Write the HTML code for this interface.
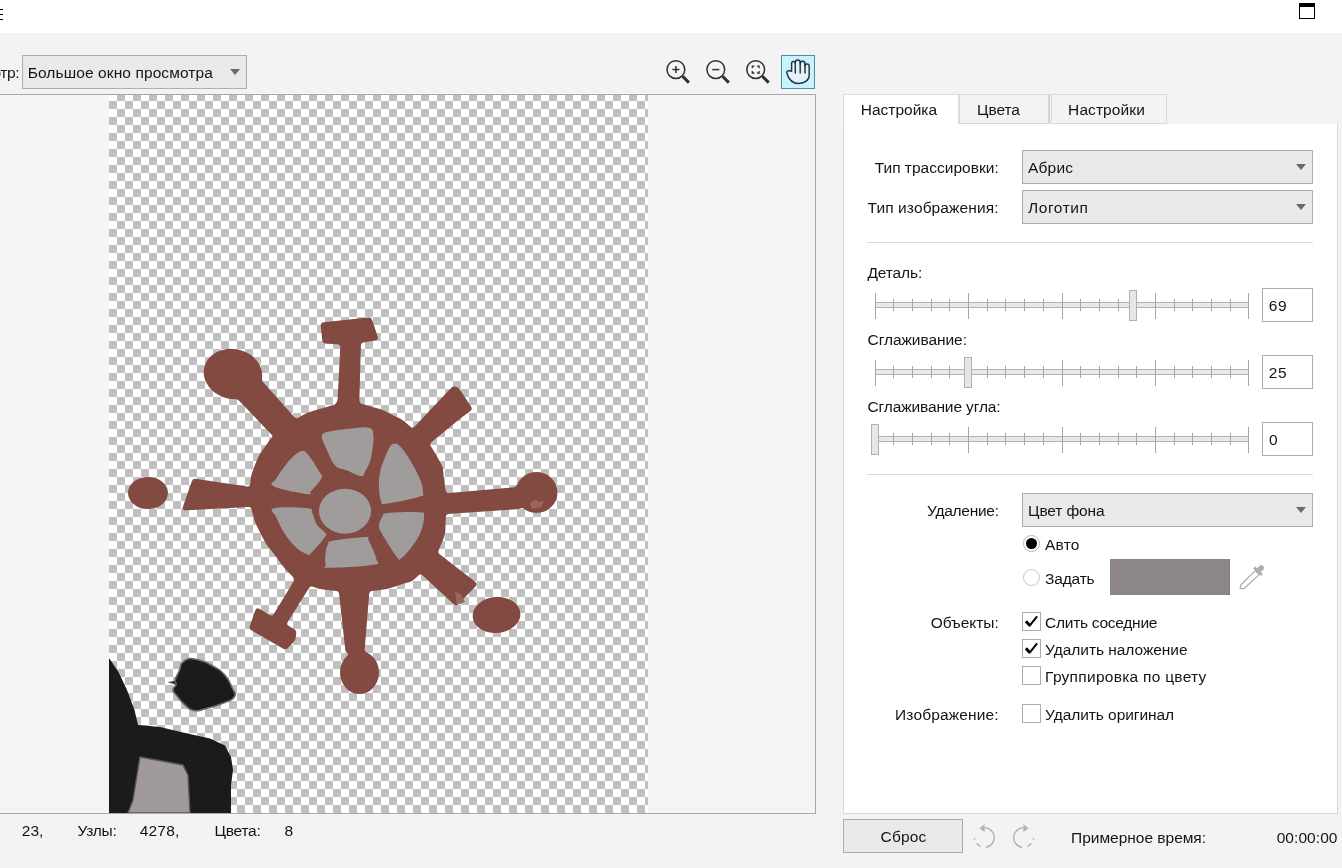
<!DOCTYPE html>
<html lang="ru">
<head>
<meta charset="utf-8">
<title>PowerTRACE</title>
<style>
html,body{margin:0;padding:0;}
body{width:1342px;height:868px;overflow:hidden;position:relative;background:#f3f3f3;
 font-family:"Liberation Sans",sans-serif;font-size:15.5px;color:#141414;}
.a{position:absolute;}
.t{position:absolute;white-space:nowrap;line-height:20.000px;height:20px;}
.dd{position:absolute;box-sizing:border-box;background:#e9e9e9;border:1px solid #adadad;}
.arr{position:absolute;width:0;height:0;border-left:5.5px solid transparent;border-right:5.5px solid transparent;border-top:6px solid #6b6b6b;}
.box{position:absolute;box-sizing:border-box;background:#fff;border:1px solid #ababab;}
.sep{position:absolute;height:1px;background:#dcdcdc;left:867px;width:446px;}
.tab{position:absolute;box-sizing:border-box;background:#f3f3f3;border:1px solid #d9d9d9;}
.track{position:absolute;box-sizing:border-box;height:6px;background:#e8e8e8;border:1px solid #b2b2b2;left:875px;width:374px;}
.thumb{position:absolute;box-sizing:border-box;width:8px;height:31px;background:#e6e6e6;border:1px solid #b0b0b0;}
.tk{position:absolute;width:1px;background:#a6a6a6;}
</style>
</head>
<body>

<div class="a" style="left:0;top:0;width:1342px;height:33px;background:#fff"></div>
<div class="a" style="left:0;top:9px;width:3px;height:1.2px;background:#000"></div>
<div class="a" style="left:0;top:14px;width:3px;height:1.2px;background:#000"></div>
<div class="a" style="left:0;top:19px;width:3px;height:1.2px;background:#000"></div>
<div class="a" style="left:1299px;top:3px;width:16px;height:16px;box-sizing:border-box;border:1px solid #000;border-top:4px solid #000;background:#fff"></div>
<div class="dd" style="left:22px;top:55px;width:225px;height:34px"></div>
<div class="arr" style="left:229.5px;top:69px"></div>
<div class="a" style="left:781px;top:55px;width:34px;height:34px;box-sizing:border-box;background:#c9f3fc;border:1px solid #4f8f98"></div>
<svg class="a" style="left:640px;top:50px" width="180" height="42" viewBox="640 50 180 42" fill="none" stroke="#303030">
<g stroke-width="1.5">
<circle cx="675.9" cy="69.6" r="8.9"/>
<circle cx="715.8" cy="69.6" r="8.9"/>
<circle cx="755.7" cy="69.6" r="8.9"/>
<path d="M672.4 69.6H679.4M675.9 66.1V73.1"/>
<path d="M712.3 69.6H719.3"/>
</g>
<g stroke-width="3">
<path d="M682.6 76.3L688.9 82.6"/>
<path d="M722.5 76.3L728.8 82.6"/>
<path d="M762.4 76.3L768.7 82.6"/>
</g>
<g stroke-width="1.3">
<path d="M752.3 68.3V66.2H754.4M757 66.2H759.1V68.3M759.1 70.9V73H757M754.4 73H752.3V70.9"/>
</g>
<g stroke="#27343c" stroke-width="1.45" stroke-linecap="round" stroke-linejoin="round">
<path fill="#e6f0fb" d="M791.6 71.2V63.4A1.85 1.85 0 0 1 795.3 63.4V62.5A2.45 2.45 0 0 1 800.2 62.5V63.7A2.4 2.4 0 0 1 805 63.7V66.1A2.07 2.07 0 0 1 809.15 66.1V75.5C809.1 80 804.6 83.5 799 83.5C793 83.5 788.6 79.4 786.9 73.2C786.4 71.4 787.6 70.7 789 70.8Z"/>
<path d="M795.3 63.4V72.9M800.2 63V72.9M805 64V72.9"/>
</g>
</svg>

<div class="a" style="left:-2px;top:94px;width:816px;height:718px;border:1px solid #a8a8a8;background:#f4f4f4"></div>
<div class="a" style="left:109px;top:95px;width:539px;height:718px;background-color:#fff;background-image:conic-gradient(#c0c0c0 25%,#fff 0 50%,#c0c0c0 0 75%,#fff 0);background-size:16px 16px;background-position:0 -2px"></div>
<svg class="a" style="left:109px;top:95px" width="539" height="718" viewBox="109 95 539 718">
<defs><filter id="rnd" x="-5%" y="-5%" width="110%" height="110%" color-interpolation-filters="sRGB"><feGaussianBlur stdDeviation="1.6"/><feColorMatrix values="1 0 0 0 0 0 1 0 0 0 0 0 1 0 0 0 0 0 4 -1.5"/></filter></defs>
<g fill="#824a41" stroke="#824a41" stroke-width="2" stroke-linejoin="round" filter="url(#rnd)">
<path d="M350.0 405.0C367.3 404.3 358.0 404.3 372.0 408.0C386.0 411.7 379.0 409.1 392.0 416.0C405.0 422.9 396.7 415.7 411.0 428.7C425.3 441.7 424.1 436.2 435.0 455.0C445.9 473.8 440.4 465.0 443.7 485.0C447.0 505.0 446.7 494.2 445.0 515.0C443.3 535.8 447.0 528.3 438.7 547.5C430.4 566.7 432.9 560.4 420.0 572.5C407.1 584.6 416.7 577.9 400.0 583.7C383.3 589.5 390.8 587.9 370.0 590.0C349.2 592.1 358.3 592.1 337.5 590.0C316.7 587.9 322.5 588.7 307.5 583.7C292.5 578.7 303.3 585.0 292.5 575.0C281.7 565.0 285.0 567.0 275.0 553.7C265.0 540.4 270.0 550.0 262.5 535.0C255.0 520.0 256.3 524.5 252.5 508.7C248.7 492.9 249.8 502.1 251.0 487.5C252.2 472.9 250.5 479.2 256.0 465.0C261.5 450.8 260.8 454.7 267.5 445.0C274.2 435.3 266.8 444.0 276.0 436.0C285.2 428.0 280.3 429.7 295.0 421.0C309.7 412.3 301.7 415.3 320.0 410.0C338.3 404.7 332.7 405.7 350.0 405.0Z"/>
<path d="M321.5 323.5L370.5 318.3L377.5 339.0L360.0 342.0L358.3 402.0L366.0 414.0L332.0 414.0L338.5 401.0L341.5 343.5L323.5 342.5Z"/>
<path d="M258.0 378.0L300.0 425.0L280.0 442.0L238.0 398.0Z"/>
<path d="M193.5 479.5L257.0 489.0L257.0 505.5L183.0 509.5Z"/>
<path d="M409.0 434.0L453.5 387.0L458.0 388.5L471.5 409.0L460.0 417.5L424.0 447.0Z"/>
<path d="M438.0 495.0L518.0 488.0L520.0 508.0L440.0 513.5Z"/>
<path d="M430.0 548.0L476.5 584.0L456.0 605.0L414.0 566.0Z"/>
<path d="M339.0 584.0L369.0 584.0L363.5 652.0L346.5 652.0Z"/>
<path d="M298.0 576.0L311.0 583.0L284.0 626.0L272.0 619.0Z"/>
<path d="M257.0 608.5L295.5 631.0L294.5 639.5L285.5 649.0L250.0 628.5Z"/>
<ellipse cx="233" cy="374" rx="28.5" ry="24" transform="rotate(12 233 374)"/>
<ellipse cx="148" cy="493" rx="19" ry="15"/>
<ellipse cx="536.5" cy="492.5" rx="20" ry="19.5"/>
<ellipse cx="496.5" cy="615" rx="23" ry="17" transform="rotate(-5 496.5 615)"/>
<ellipse cx="359.5" cy="672.5" rx="18.5" ry="20.5"/>
</g>
<g fill="#a19c9c">
<path d="M321.9 436.9C322.6 435.3 320.6 433.9 326.0 432.3C331.4 430.7 340.8 429.7 349.1 428.8C357.4 427.9 362.7 426.4 367.5 427.6C372.3 428.8 372.6 428.6 373.3 434.6C374.0 440.6 372.6 450.2 371.0 457.6C369.4 465.0 367.3 467.7 365.2 471.4C363.1 475.1 364.3 476.2 360.6 476.0C356.9 475.8 351.9 472.4 346.8 470.3C341.7 468.2 339.2 469.6 335.3 465.7C331.4 461.8 329.7 455.8 327.2 450.7C324.7 445.6 323.7 443.1 322.6 440.3C321.5 437.5 321.2 438.5 321.9 436.9Z"/>
<path d="M301.8 451.2C304.1 451.2 304.1 450.1 307.6 454.1C311.1 458.1 316.3 466.6 319.1 471.4C321.9 476.2 323.0 474.4 321.4 478.3C319.8 482.2 313.9 487.9 311.1 491.0C308.3 494.1 315.0 494.9 307.6 494.0C300.2 493.1 280.4 489.5 274.2 486.4C268.0 483.3 274.0 482.9 276.5 478.3C279.0 473.7 283.0 468.2 286.9 463.4C290.8 458.6 293.1 456.5 296.1 454.1C299.1 451.7 299.5 451.2 301.8 451.2Z"/>
<path d="M394.0 443.8C395.8 443.8 396.3 442.4 399.8 446.1C403.3 449.8 407.2 455.3 411.3 462.2C415.4 469.1 418.2 474.6 420.5 480.6C422.8 486.6 423.0 489.0 422.8 492.2C422.6 495.4 426.8 494.5 419.4 496.8C412.0 499.1 393.5 502.8 385.9 503.7C378.3 504.6 382.7 504.6 381.3 501.4C379.9 498.2 379.2 493.6 379.0 487.6C378.8 481.6 378.8 477.9 380.2 471.4C381.6 464.9 383.8 460.4 385.9 455.3C388.0 450.2 389.0 448.4 390.6 446.1C392.2 443.8 392.2 443.8 394.0 443.8Z"/>
<path d="M274.2 508.3C280.4 506.5 300.0 507.4 307.6 508.3C315.2 509.2 310.4 509.7 312.2 512.9C314.0 516.1 314.3 520.5 316.8 524.4C319.3 528.3 323.3 530.0 324.9 532.5C326.5 535.0 327.7 533.0 324.9 537.1C322.1 541.2 314.6 549.7 311.1 553.2C307.6 556.7 310.6 555.5 307.6 554.4C304.6 553.3 300.7 551.7 296.1 547.5C291.5 543.3 288.5 539.6 284.6 533.6C280.7 527.6 278.6 522.6 276.5 517.5C274.4 512.4 268.0 510.1 274.2 508.3Z"/>
<path d="M331.8 541.0C339.2 539.6 357.8 537.2 365.2 537.1C372.6 537.0 366.5 536.2 368.7 540.6C370.9 545.0 375.4 554.2 376.3 559.0C377.2 563.8 382.7 563.0 373.3 564.7C363.9 566.4 339.0 567.7 329.5 567.7C320.0 567.7 326.4 567.8 325.6 564.7C324.8 561.6 325.1 556.2 325.6 552.1C326.1 548.0 327.1 546.2 328.3 544.0C329.5 541.8 324.4 542.4 331.8 541.0Z"/>
<path d="M388.2 512.9C395.6 512.1 412.2 511.5 419.4 512.2C426.6 512.9 423.8 512.3 424.0 516.4C424.2 520.5 423.0 526.3 420.5 532.5C418.0 538.7 415.2 542.3 411.3 547.5C407.4 552.7 403.7 556.4 400.9 558.5C398.1 560.6 400.0 560.7 397.5 557.8C395.0 554.9 391.4 549.1 388.2 544.0C385.0 538.9 383.1 536.2 381.3 532.5C379.5 528.8 378.8 528.8 379.0 525.6C379.2 522.4 380.7 518.9 382.5 516.4C384.3 513.9 380.8 513.7 388.2 512.9Z"/>
<ellipse cx="345" cy="511.2" rx="26" ry="22.5"/>
</g>
<path d="M530 503l5-3 4 2 5-1-3 6-9 2z" fill="#9a6660"/>
<path d="M455 592l6 2 4 8-8 3z" fill="#9a6660"/>
<g fill="#1b1b1b">
<path d="M109 658L118.5 672L127 690L134.5 710L138 725L160 727L185 733L210 738.5L225 745.5L231 757L233 770L231 785V813H109Z"/>
<path d="M184.4 660.7C189.4 657.7 189.9 658.0 197.9 659.7C205.9 661.4 207.3 662.8 214.5 667.0C221.7 671.2 220.2 669.8 224.9 675.3C229.6 680.8 229.6 681.9 232.1 687.7C234.6 693.5 236.7 692.8 234.2 697.0C231.7 701.2 230.3 700.2 222.8 703.3C215.3 706.4 214.0 706.6 206.2 708.5C198.4 710.4 199.5 711.6 193.7 710.5C187.9 709.4 188.8 708.2 184.4 704.3C180.0 700.4 180.1 699.9 177.1 696.0C174.1 692.1 173.3 692.8 173.0 689.8C172.7 686.8 175.6 687.1 176.1 684.6C176.6 682.1 174.2 684.1 175.0 680.5C175.8 676.9 176.7 676.3 179.2 671.0C181.7 665.7 179.4 663.7 184.4 660.7Z" stroke="#6a6666" stroke-width="1.6" stroke-linejoin="round"/>
<path d="M176 684.2L168.6 682.3L175.5 681Z" stroke="#6a6666" stroke-width="1"/>
</g>
<path d="M140 757L183 765L188 775L190 813H128L133 800L137 775Z" fill="#a09b9a" stroke="#5a5757" stroke-width="1.4" stroke-linejoin="round"/>
</svg>

<div class="a" style="left:843px;top:124px;width:493px;height:689px;background:#fff;border:1px solid #d8d8d8;border-top:none"></div>
<div class="tab" style="left:959px;top:94px;width:91px;height:30px;border-right:2px solid #d3d3d3"></div>
<div class="tab" style="left:1051px;top:94px;width:116px;height:30px"></div>
<div class="a" style="left:843px;top:94px;width:114px;height:30px;background:#fff;border:1px solid #dedede;border-bottom:none"></div>
<div class="dd" style="left:1022px;top:150px;width:291px;height:34px"></div>
<div class="arr" style="left:1296px;top:164px"></div>
<div class="dd" style="left:1022px;top:190px;width:291px;height:34px"></div>
<div class="arr" style="left:1296px;top:204px"></div>
<div class="dd" style="left:1022px;top:493px;width:291px;height:34px"></div>
<div class="arr" style="left:1296px;top:507px"></div>
<div class="sep" style="top:242px"></div>
<div class="sep" style="top:474px"></div>
<div class="track" style="top:302px"></div>
<div class="tk" style="left:875px;top:293px;height:26px"></div>
<div class="tk" style="left:893px;top:299px;height:12px"></div>
<div class="tk" style="left:912px;top:299px;height:12px"></div>
<div class="tk" style="left:931px;top:299px;height:12px"></div>
<div class="tk" style="left:949px;top:299px;height:12px"></div>
<div class="tk" style="left:968px;top:293px;height:26px"></div>
<div class="tk" style="left:987px;top:299px;height:12px"></div>
<div class="tk" style="left:1005px;top:299px;height:12px"></div>
<div class="tk" style="left:1024px;top:299px;height:12px"></div>
<div class="tk" style="left:1043px;top:299px;height:12px"></div>
<div class="tk" style="left:1062px;top:293px;height:26px"></div>
<div class="tk" style="left:1080px;top:299px;height:12px"></div>
<div class="tk" style="left:1099px;top:299px;height:12px"></div>
<div class="tk" style="left:1118px;top:299px;height:12px"></div>
<div class="tk" style="left:1136px;top:299px;height:12px"></div>
<div class="tk" style="left:1155px;top:293px;height:26px"></div>
<div class="tk" style="left:1174px;top:299px;height:12px"></div>
<div class="tk" style="left:1192px;top:299px;height:12px"></div>
<div class="tk" style="left:1211px;top:299px;height:12px"></div>
<div class="tk" style="left:1230px;top:299px;height:12px"></div>
<div class="tk" style="left:1248px;top:293px;height:26px"></div>
<div class="thumb" style="left:1129px;top:290px"></div>
<div class="box" style="left:1262px;top:288px;width:51px;height:34px"></div>
<div class="track" style="top:369px"></div>
<div class="tk" style="left:875px;top:360px;height:26px"></div>
<div class="tk" style="left:893px;top:366px;height:12px"></div>
<div class="tk" style="left:912px;top:366px;height:12px"></div>
<div class="tk" style="left:931px;top:366px;height:12px"></div>
<div class="tk" style="left:949px;top:366px;height:12px"></div>
<div class="tk" style="left:968px;top:360px;height:26px"></div>
<div class="tk" style="left:987px;top:366px;height:12px"></div>
<div class="tk" style="left:1005px;top:366px;height:12px"></div>
<div class="tk" style="left:1024px;top:366px;height:12px"></div>
<div class="tk" style="left:1043px;top:366px;height:12px"></div>
<div class="tk" style="left:1062px;top:360px;height:26px"></div>
<div class="tk" style="left:1080px;top:366px;height:12px"></div>
<div class="tk" style="left:1099px;top:366px;height:12px"></div>
<div class="tk" style="left:1118px;top:366px;height:12px"></div>
<div class="tk" style="left:1136px;top:366px;height:12px"></div>
<div class="tk" style="left:1155px;top:360px;height:26px"></div>
<div class="tk" style="left:1174px;top:366px;height:12px"></div>
<div class="tk" style="left:1192px;top:366px;height:12px"></div>
<div class="tk" style="left:1211px;top:366px;height:12px"></div>
<div class="tk" style="left:1230px;top:366px;height:12px"></div>
<div class="tk" style="left:1248px;top:360px;height:26px"></div>
<div class="thumb" style="left:964px;top:357px"></div>
<div class="box" style="left:1262px;top:355px;width:51px;height:34px"></div>
<div class="track" style="top:436px"></div>
<div class="tk" style="left:875px;top:427px;height:26px"></div>
<div class="tk" style="left:893px;top:433px;height:12px"></div>
<div class="tk" style="left:912px;top:433px;height:12px"></div>
<div class="tk" style="left:931px;top:433px;height:12px"></div>
<div class="tk" style="left:949px;top:433px;height:12px"></div>
<div class="tk" style="left:968px;top:427px;height:26px"></div>
<div class="tk" style="left:987px;top:433px;height:12px"></div>
<div class="tk" style="left:1005px;top:433px;height:12px"></div>
<div class="tk" style="left:1024px;top:433px;height:12px"></div>
<div class="tk" style="left:1043px;top:433px;height:12px"></div>
<div class="tk" style="left:1062px;top:427px;height:26px"></div>
<div class="tk" style="left:1080px;top:433px;height:12px"></div>
<div class="tk" style="left:1099px;top:433px;height:12px"></div>
<div class="tk" style="left:1118px;top:433px;height:12px"></div>
<div class="tk" style="left:1136px;top:433px;height:12px"></div>
<div class="tk" style="left:1155px;top:427px;height:26px"></div>
<div class="tk" style="left:1174px;top:433px;height:12px"></div>
<div class="tk" style="left:1192px;top:433px;height:12px"></div>
<div class="tk" style="left:1211px;top:433px;height:12px"></div>
<div class="tk" style="left:1230px;top:433px;height:12px"></div>
<div class="tk" style="left:1248px;top:427px;height:26px"></div>
<div class="thumb" style="left:871px;top:424px"></div>
<div class="box" style="left:1262px;top:422px;width:51px;height:34px"></div>
<div class="a" style="left:1023px;top:535px;width:17px;height:17px;box-sizing:border-box;border:1px solid #b5b5b5;border-radius:50%;background:#fff"></div>
<div class="a" style="left:1026px;top:538px;width:11px;height:11px;border-radius:50%;background:#000"></div>
<div class="a" style="left:1023px;top:569px;width:17px;height:17px;box-sizing:border-box;border:1px solid #c4c4c4;border-radius:50%;background:#fff"></div>
<div class="a" style="left:1110px;top:559px;width:120px;height:36px;background:#8c8786;box-shadow:inset -1px 0 0 #827d7c"></div>
<svg class="a" style="left:1236px;top:562px" width="32" height="30" viewBox="1236 562 32 30"><path d="M1240.4 585.5L1255.2 570.7L1259.1 574.6L1244.1 588.5L1240.2 588.6Z" fill="#fff" stroke="#adadad" stroke-width="1.2" stroke-linejoin="round"/><path d="M1253.2 568.4L1255.2 566.4L1262.8 574L1260.8 576Z" fill="#adadad"/><path d="M1257 568.4L1259.6 565.8A2.7 2.7 0 0 1 1263.4 569.6L1260.8 572.2Z" fill="#adadad"/></svg>
<div class="box" style="left:1022px;top:612px;width:19px;height:19px"></div>
<svg class="a" style="left:1022px;top:612px" width="19" height="19" viewBox="0 0 19 19"><path d="M3.9 9.3L8 13.7" fill="none" stroke="#000" stroke-width="2.9"/><path d="M7.3 14.1L15.1 4.4" fill="none" stroke="#000" stroke-width="2"/></svg>
<div class="box" style="left:1022px;top:639px;width:19px;height:19px"></div>
<svg class="a" style="left:1022px;top:639px" width="19" height="19" viewBox="0 0 19 19"><path d="M3.9 9.3L8 13.7" fill="none" stroke="#000" stroke-width="2.9"/><path d="M7.3 14.1L15.1 4.4" fill="none" stroke="#000" stroke-width="2"/></svg>
<div class="box" style="left:1022px;top:666px;width:19px;height:19px"></div>
<div class="box" style="left:1022px;top:704px;width:19px;height:19px"></div>
<div class="dd" style="left:843px;top:819px;width:120px;height:34px"></div>
<svg class="a" style="left:965px;top:815px" width="80" height="42" viewBox="965 815 80 42" fill="none" stroke="#b4b4b4" stroke-width="1.5">
<path d="M984.4 827.8A9.85 9.85 0 0 1 985.9 847.4"/>
<path d="M980.6 846.6L976.6 843.6" />
<path d="M974.6 839.6L974.2 838.4" stroke-width="1.8"/>
<path d="M979.4 828.2L984.6 824.3V832Z" fill="#b4b4b4" stroke="none"/>
<path d="M1023.6 827.8A9.85 9.85 0 0 0 1022.1 847.4"/>
<path d="M1027.4 846.6L1031.4 843.6"/>
<path d="M1033.4 839.6L1033.8 838.4" stroke-width="1.8"/>
<path d="M1028.6 828.2L1023.4 824.3V832Z" fill="#b4b4b4" stroke="none"/>
</svg>

<div class="a" style="left:0;top:0;width:1342px;height:868px;will-change:transform">
<div class="t" style="left:-52.0px;top:63px;letter-spacing:-0.45px;">Просмотр:</div>
<div class="t" style="left:27.7px;top:63px;letter-spacing:0.10px;">Большое окно просмотра</div>
<div class="t" style="left:860.7px;top:100px;letter-spacing:0.01px;">Настройка</div>
<div class="t" style="left:977.1px;top:100px;letter-spacing:-0.08px;">Цвета</div>
<div class="t" style="left:1068.1px;top:100px;letter-spacing:0.09px;">Настройки</div>
<div class="t" style="left:874.7px;top:158px;letter-spacing:0.01px;">Тип трассировки:</div>
<div class="t" style="left:1028.1px;top:158px;letter-spacing:0.15px;">Абрис</div>
<div class="t" style="left:867.5px;top:198px;letter-spacing:0.11px;">Тип изображения:</div>
<div class="t" style="left:1028.1px;top:198px;letter-spacing:0.55px;">Логотип</div>
<div class="t" style="left:867.5px;top:263px;letter-spacing:-0.14px;">Деталь:</div>
<div class="t" style="left:1268.7px;top:296px;letter-spacing:0.57px;">69</div>
<div class="t" style="left:867.5px;top:330px;letter-spacing:-0.05px;">Сглаживание:</div>
<div class="t" style="left:1268.7px;top:363px;letter-spacing:0.57px;">25</div>
<div class="t" style="left:867.5px;top:397px;letter-spacing:-0.12px;">Сглаживание угла:</div>
<div class="t" style="left:1268.9px;top:430px;letter-spacing:0.98px;">0</div>
<div class="t" style="left:927.1px;top:501px;letter-spacing:-0.28px;">Удаление:</div>
<div class="t" style="left:1028.1px;top:501px;letter-spacing:-0.13px;">Цвет фона</div>
<div class="t" style="left:1045.1px;top:535px;letter-spacing:0.15px;">Авто</div>
<div class="t" style="left:1045.1px;top:569px;letter-spacing:-0.18px;">Задать</div>
<div class="t" style="left:930.7px;top:613px;letter-spacing:-0.03px;">Объекты:</div>
<div class="t" style="left:1045.1px;top:613px;letter-spacing:-0.27px;">Слить соседние</div>
<div class="t" style="left:1045.1px;top:640px;letter-spacing:-0.04px;">Удалить наложение</div>
<div class="t" style="left:1045.1px;top:667px;letter-spacing:0.27px;">Группировка по цвету</div>
<div class="t" style="left:895.1px;top:705px;letter-spacing:0.14px;">Изображение:</div>
<div class="t" style="left:1045.1px;top:705px;letter-spacing:-0.06px;">Удалить оригинал</div>
<div class="t" style="left:880.5px;top:827px;letter-spacing:0.19px;">Сброс</div>
<div class="t" style="left:1071.1px;top:828px;letter-spacing:-0.02px;">Примерное время:</div>
<div class="t" style="left:1276.7px;top:828px;letter-spacing:0.06px;">00:00:00</div>
<div class="t" style="left:21.7px;top:821px;letter-spacing:0.08px;">23,</div>
<div class="t" style="left:77.5px;top:821px;letter-spacing:-0.28px;">Узлы:</div>
<div class="t" style="left:139.7px;top:821px;letter-spacing:0.20px;">4278,</div>
<div class="t" style="left:214.5px;top:821px;letter-spacing:-0.25px;">Цвета:</div>
<div class="t" style="left:284.4px;top:821px;letter-spacing:-0.13px;">8</div>
</div>
</body>
</html>
